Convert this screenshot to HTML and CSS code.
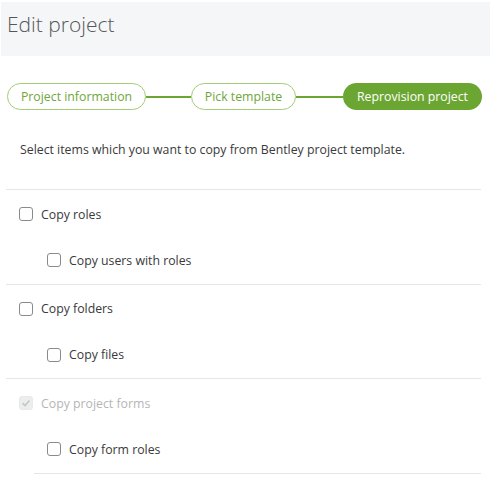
FILE: index.html
```html
<!DOCTYPE html>
<html>
<head>
<meta charset="utf-8">
<link rel="stylesheet" href="styles.css">
</head>
<body>
<div class="header"><h1 class="title">Edit project</h1></div>
<div class="stepper">
  <div class="step done first">Project information</div>
  <div class="connector c1"></div>
  <div class="step done second">Pick template</div>
  <div class="connector c2"></div>
  <div class="step active">Reprovision project</div>
</div>
<p class="intro">Select items which you want to copy from Bentley project template.</p>
<div class="list">
  <div class="group">
    <label class="item"><span class="box"></span><span>Copy roles</span></label>
    <label class="item sub"><span class="box"></span><span>Copy users with roles</span></label>
  </div>
  <div class="group">
    <label class="item"><span class="box"></span><span>Copy folders</span></label>
    <label class="item sub"><span class="box"></span><span>Copy files</span></label>
  </div>
  <div class="group last">
    <label class="item disabled"><span class="box checked"><svg width="10" height="10" viewBox="0 0 10 10"><path d="M1.5 5.2 L4 7.5 L8.5 2.5" fill="none" stroke="#c4c6c8" stroke-width="1.6"/></svg></span><span>Copy project forms</span></label>
    <label class="item sub"><span class="box"></span><span>Copy form roles</span></label>
  </div>
  <div class="end-rule"></div>
</div>
</body>
</html>
```
FILE: styles.css
```css
html, body {
  margin: 0;
  padding: 0;
  background: #ffffff;
  font-family: "Open Sans", "Liberation Sans", sans-serif;
  color: #3a3a3a;
}
.header {
  margin: 2px 2px 0 1px;
  height: 54px;
  background: #f5f6f8;
  display: flex;
  align-items: center;
  padding-left: 6px;
}
.title {
  margin: 0;
  font-size: 21px;
  font-weight: 300;
  color: #55565c;
  line-height: 1;
  position: relative;
  top: -5px;
}
.stepper {
  display: flex;
  align-items: center;
  margin: 27px 10px 0 7px;
}
.step {
  height: 27px;
  box-sizing: border-box;
  border-radius: 14px;
  font-size: 12.3px;
  display: flex;
  align-items: center;
  justify-content: center;
  white-space: nowrap;
  flex: none;
}
.step.done {
  border: 1.5px solid #a3cc79;
  color: #6fa63b;
}
.step.first { width: 139px; }
.step.second { width: 105px; }
.step.active {
  background: #6ca632;
  color: #ffffff;
  width: 139px;
}
.connector {
  height: 2px;
  background: #6ca632;
  flex: none;
}
.c1 { width: 45px; }
.c2 { width: 47px; }
.intro {
  margin: 31px 0 0 20px;
  font-size: 12.3px;
  line-height: 18px;
}
.list {
  margin: 30px 11px 0 6px;
}
.group {
  border-top: 1.5px solid #e6e6e6;
  display: flex;
  flex-direction: column;
  padding: 15px 0 0;
  height: 94.5px;
  box-sizing: border-box;
}
.end-rule {
  margin-left: 28px;
  border-top: 1.5px solid #e6e6e6;
}
.item {
  display: flex;
  align-items: center;
  gap: 8px;
  height: 18px;
  font-size: 12.3px;
  color: #3a3a3a;
  padding-left: 13px;
}
.item.sub {
  padding-left: 41px;
  margin-top: 28px;
}
.box {
  width: 12px;
  height: 12px;
  border: 1px solid #8a8a8a;
  border-radius: 3px;
  background: #fff;
  flex: none;
  display: flex;
  align-items: center;
  justify-content: center;
}
.box.checked {
  border-color: #e8e9ea;
  background: #eceded;
}
.item.disabled {
  color: #b4b6b8;
}
```
